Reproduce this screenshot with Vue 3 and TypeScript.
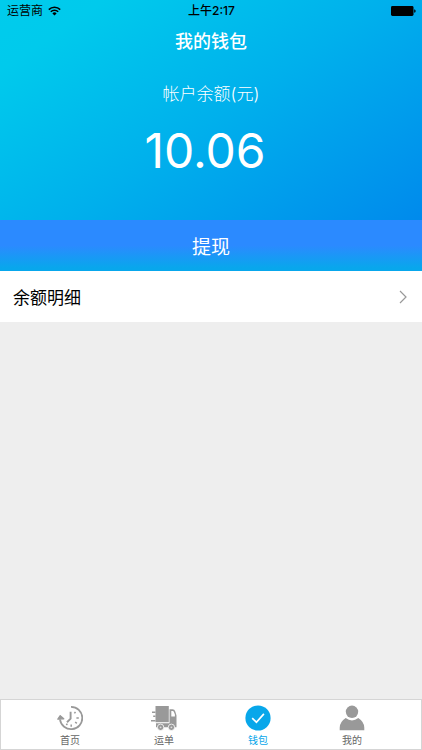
<script setup lang="ts">
import { ref } from 'vue'

type TabKey = 'home' | 'orders' | 'wallet' | 'mine'

const tabs: { key: TabKey; label: string }[] = [
  { key: 'home', label: '首页' },
  { key: 'orders', label: '运单' },
  { key: 'wallet', label: '钱包' },
  { key: 'mine', label: '我的' },
]

const active = ref<TabKey>('wallet')
const balance = ref(10.06)
</script>

<template>
  <div class="screen">
    <header class="hero">
      <div class="status">
        <div class="carrier">
          <span>运营商</span>
          <svg class="wifi" viewBox="0 0 13 10" aria-hidden="true">
            <path d="M.8 3.6a8.2 8.2 0 0 1 11.4 0M2.8 5.8a5.3 5.3 0 0 1 7.4 0" fill="none" stroke="currentColor" stroke-width="1.6" />
            <path d="M4.4 7.4a3 3 0 0 1 4.2 0l-2.1 2.2z" fill="currentColor" />
          </svg>
        </div>
        <span class="time">上午2:17</span>
        <svg class="battery" viewBox="0 0 25 10" aria-hidden="true">
          <rect width="22.5" height="10" rx="1.4" />
          <path d="M23.2 3.2q1.5.4 1.5 1.8t-1.5 1.8z" />
        </svg>
      </div>
      <h1 class="title">我的钱包</h1>
      <p class="caption">帐户余额(元)</p>
      <p class="amount">{{ balance.toFixed(2) }}</p>
    </header>

    <button class="withdraw" type="button">提现</button>

    <a class="row" href="#details">
      <span>余额明细</span>
      <svg class="chevron" viewBox="0 0 8 14" aria-hidden="true">
        <path d="M1 1l6 6-6 6" fill="none" stroke="#999" stroke-width="1.2" />
      </svg>
    </a>

    <main class="blank"></main>

    <nav class="tabs">
      <button
        v-for="tab in tabs"
        :key="tab.key"
        type="button"
        class="tab"
        :class="{ active: tab.key === active }"
        @click="active = tab.key"
      >
        <svg v-if="tab.key === 'home'" class="icon" viewBox="0 0 26 26" aria-hidden="true">
          <path d="M14 1.8A11.2 11.2 0 1 1 3 14.5" fill="none" stroke="#999" stroke-width="1.8" />
          <path d="M.8 14.2L3.2 10.6l3.6 3.2z" fill="#999" stroke="#999" stroke-width="1.2" stroke-linejoin="round" />
          <path d="M13.6 6.8v6.9L10 17.2" fill="none" stroke="#999" stroke-width="1.9" />
          <path d="M17.4 8.4l1.1-1.6M19.4 13h2.4M18.2 17l1.6 1.4M14.2 19.4v2.4M9.4 20.2l.9-1.5" fill="none" stroke="#999" stroke-width="1.5" />
        </svg>
        <svg v-else-if="tab.key === 'orders'" class="icon" viewBox="0 0 26 26" aria-hidden="true">
          <path d="M4.5 1h13.3v16.2H4.5z" fill="#999" />
          <path d="M1 7.2h3.5M2.2 11.2h2.3M0 15.8h4.5" stroke="#999" stroke-width="1.4" />
          <path fill-rule="evenodd" fill="#999" d="M18.5 4.3h3.1q2 0 2.7 2.1l1.2 4v11.8H5v-4h13.5zm1.8 1.7v5.4h3.6V9.6l-1-2.7q-.4-.9-1.2-.9z" />
          <circle cx="9.6" cy="22.3" r="3.2" fill="#999" stroke="#fff" stroke-width=".8" />
          <circle cx="20.4" cy="22.3" r="3.2" fill="#999" stroke="#fff" stroke-width=".8" />
          <circle cx="9.6" cy="22.3" r=".9" fill="#ddd" />
          <circle cx="20.4" cy="22.3" r=".9" fill="#ddd" />
        </svg>
        <svg v-else-if="tab.key === 'wallet'" class="icon" viewBox="0 0 26 26" aria-hidden="true">
          <circle cx="13" cy="13" r="12.6" fill="#08a7ea" />
          <path d="M7.2 13.2l4.2 4 7.5-8.3" fill="none" stroke="#fff" stroke-width="1.7" />
        </svg>
        <svg v-else class="icon" viewBox="0 0 26 26" aria-hidden="true">
          <circle cx="13" cy="6.8" r="6.2" fill="#999" />
          <path d="M.7 25.2v-2.4q0-5.8 6-9.7 6.3 4.6 12.6 0 6 3.9 6 9.7v2.4z" fill="#999" />
        </svg>
        <span>{{ tab.label }}</span>
      </button>
    </nav>
  </div>
</template>

<style>
body {
  margin: 0;
  background: #eee;
}
</style>

<style scoped>
.screen {
  display: flex;
  flex-direction: column;
  min-height: 100vh;
  font-family: Inter, "Noto Sans CJK SC", sans-serif;
  color: #000;
}
.hero {
  display: flex;
  flex-direction: column;
  box-sizing: border-box;
  padding-bottom: 37px;
  background: linear-gradient(146deg, #00ccec 0%, #00caec 14%, #00b0ec 52%, #008aec 100%);
  color: #fff;
  text-align: center;
}
.status {
  display: grid;
  grid-template-columns: 1fr auto 1fr;
  align-items: center;
  height: 22px;
  padding: 0 6px 0 7px;
  font-size: 12px;
  line-height: 22px;
  color: #000;
}
.carrier {
  display: flex;
  align-items: center;
  gap: 5px;
}
.wifi {
  width: 13px;
  height: 10px;
}
.time {
  font-weight: 500;
}
.battery {
  justify-self: end;
  width: 25px;
  height: 10px;
}
.title {
  margin: 0;
  font-size: 18px;
  font-weight: 500;
  line-height: 40px;
}
.caption {
  margin: 19px 0 0;
  font-size: 17px;
  font-weight: 300;
  line-height: 26px;
}
.amount {
  margin: 12px 0 0;
  padding-right: 12px;
  font-size: 48px;
  font-weight: 400;
  line-height: 64px;
}
.withdraw {
  height: 51px;
  padding: 0;
  border: 0;
  background: linear-gradient(#2b8aff 50%, #08a7ec 94%);
  color: #fff;
  font: inherit;
  font-size: 19px;
}
.row {
  display: flex;
  align-items: center;
  justify-content: space-between;
  height: 51px;
  padding: 0 15px 0 13px;
  background: #fff;
  color: #000;
  font-size: 17px;
  text-decoration: none;
}
.chevron {
  width: 8px;
  height: 14px;
}
.blank {
  flex: 1;
  background: #eee;
}
.tabs {
  display: flex;
  box-sizing: border-box;
  height: 51px;
  padding: 0 22px;
  border: 1px solid #d5d5d5;
  background: #fff;
}
.tab {
  display: flex;
  flex: 1;
  flex-direction: column;
  align-items: center;
  padding: 5px 0 0;
  border: 0;
  background: none;
  color: #666;
  font: inherit;
  font-size: 10px;
  line-height: 18px;
}
.tab.active {
  color: #08a7ea;
}
.icon {
  width: 26px;
  height: 26px;
}
</style>
